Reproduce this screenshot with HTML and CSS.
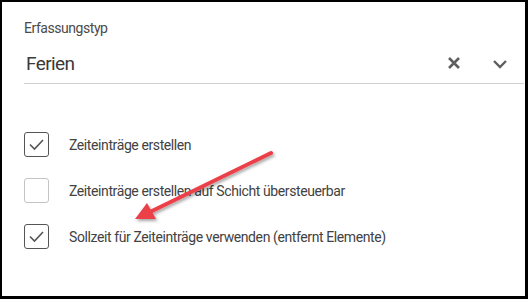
FILE: index.html
```html
<!DOCTYPE html>
<html lang="de">
  <head>
    <meta charset="UTF-8" />
    <title>Erfassungstyp</title>
    <link rel="stylesheet" href="styles.css">
  </head>
  <body>
    <div id="frame">
      <div class="field">
        <label class="field-label">Erfassungstyp</label>
        <div class="select">
          <span class="select-value">Ferien</span>
          <span class="select-icons">
            <svg class="icon-clear" width="14" height="14" viewBox="0 0 14 14">
              <path d="M2 2 L12 12 M12 2 L2 12" stroke="#5f5f5f" stroke-width="2.6" fill="none"/>
            </svg>
            <svg class="icon-caret" width="16" height="10" viewBox="0 0 16 10">
              <path d="M2 2 L8 8 L14 2" stroke="#5f5f5f" stroke-width="2.4" fill="none"/>
            </svg>
          </span>
        </div>
      </div>

      <div class="options">
        <div class="option">
          <span class="box checked">
            <svg width="17" height="13" viewBox="0 0 17 13"><path d="M2 6.5 L6.5 11 L15 2" stroke="#555" stroke-width="1.6" fill="none"/></svg>
          </span>
          <span class="option-text">Zeiteinträge erstellen</span>
        </div>
        <div class="option">
          <span class="box"></span>
          <span class="option-text">Zeiteinträge erstellen auf Schicht übersteuerbar</span>
        </div>
        <div class="option">
          <span class="box checked">
            <svg width="17" height="13" viewBox="0 0 17 13"><path d="M2 6.5 L6.5 11 L15 2" stroke="#555" stroke-width="1.6" fill="none"/></svg>
          </span>
          <span class="option-text">Sollzeit für Zeiteinträge verwenden (entfernt Elemente)</span>
        </div>
      </div>

      <!-- annotation arrow -->
      <svg class="arrow" width="528" height="299" viewBox="0 0 528 299">
        <defs>
          <filter id="sh" x="-20%" y="-20%" width="140%" height="140%">
            <feDropShadow dx="1.5" dy="2" stdDeviation="1.5" flood-color="#000" flood-opacity="0.35"/>
          </filter>
        </defs>
        <g filter="url(#sh)">
          <line x1="271" y1="153" x2="150" y2="212" stroke="#ec3f4a" stroke-width="4" stroke-linecap="round"/>
          <polygon points="135,219 147,203 156,219" fill="#ec3f4a"/>
        </g>
      </svg>
    </div>
  </body>
</html>
```

FILE: styles.css
```css
body {
  margin: 0;
  padding: 0;
  font-family: Roboto, "Liberation Sans", sans-serif;
  color: #333;
}

#frame {
  position: relative;
  width: 523px;
  height: 294px;
  border: 2px solid #000;
  border-right-width: 3px;
  border-bottom-width: 3px;
  background: #fff;
  box-sizing: content-box;
  overflow: hidden;
}

.field {
  padding: 18px 1px 0 22px;
}

.field-label {
  display: block;
  font-size: 14px;
  color: #4a4a4a;
  line-height: 17px;
  letter-spacing: -0.45px;
}

.select {
  display: flex;
  align-items: center;
  justify-content: space-between;
  height: 40px;
  padding-top: 6px;
  border-bottom: 1px solid #d0d0d0;
}

.select-value {
  font-size: 19px;
  color: #3a3a3a;
  padding-left: 2px;
  letter-spacing: -0.6px;
}

.select-icons {
  display: flex;
  align-items: center;
  gap: 31px;
  padding-right: 16px;
}

.icon-caret {
  margin-top: 2px;
}

.options {
  display: flex;
  flex-direction: column;
  gap: 21px;
  padding: 48px 0 0 22px;
}

.option {
  display: flex;
  align-items: center;
  gap: 20px;
}

.box {
  width: 23px;
  height: 23px;
  border: 1px solid #c4c4c4;
  border-radius: 3px;
  display: flex;
  align-items: center;
  justify-content: center;
}

.box.checked {
  border-color: #555;
}

.option-text {
  font-size: 14px;
  color: #424242;
  letter-spacing: -0.4px;
}

.arrow {
  position: absolute;
  left: -2px;
  top: -2px;
  pointer-events: none;
}
```
